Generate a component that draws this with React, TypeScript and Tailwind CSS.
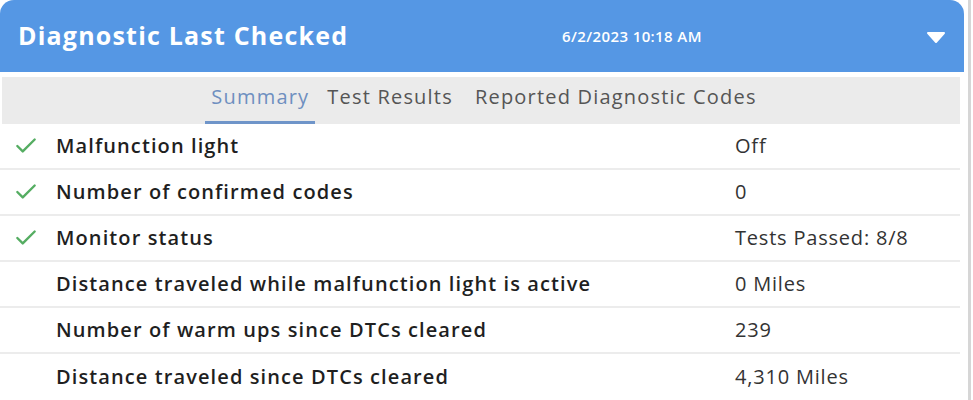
import { Check } from "lucide-react";

const rows = [
  { label: "Malfunction light", value: "Off", ok: true },
  { label: "Number of confirmed codes", value: "0", ok: true },
  { label: "Monitor status", value: "Tests Passed: 8/8", ok: true },
  { label: "Distance traveled while malfunction light is active", value: "0 Miles", ok: false },
  { label: "Number of warm ups since DTCs cleared", value: "239", ok: false },
  { label: "Distance traveled since DTCs cleared", value: "4,310 Miles", ok: false },
];

export default function App() {
  return (
    <div className="w-[973px] h-[400px] bg-white overflow-hidden flex font-['Open_Sans',sans-serif]">
      <div className="w-[964px] flex flex-col">
        {/* Header */}
        <div className="h-[72px] bg-[#5597e4] rounded-t-[14px] flex items-center pl-[18px] pr-[18px]">
          <h1 className="text-[25px] font-bold text-white w-[544px] tracking-[1.2px]">
            Diagnostic Last Checked
          </h1>
          <span className="text-[15px] font-semibold text-white flex-1 tracking-[0.4px]">6/2/2023 10:18 AM</span>
          <svg width="20" height="13" viewBox="0 0 20 13" className="mt-[2px]">
            <path d="M2 2 L18 2 L10 11 Z" fill="white" stroke="white" strokeWidth="2" strokeLinejoin="round" />
          </svg>
        </div>

        {/* Tabs */}
        <div className="mt-[5px] mx-[2px] mr-[4px] h-[47px] bg-[#ebebeb] flex justify-center items-end gap-[12px] text-[20px] tracking-[1.2px]">
          <div className="px-[6px] pb-[9px] border-b-[3px] border-[#6f95c9] text-[#6e8fc0]">Summary</div>
          <div className="pb-[12px] text-[#555]">Test Results</div>
          <div className="pl-[10px] pb-[12px] text-[#555]">Reported Diagnostic Codes</div>
        </div>

        {/* Rows */}
        <div className="flex flex-col mr-[4px]">
          {rows.map((r, i) => (
            <div
              key={r.label}
              className={`h-[46px] flex items-center ${i < rows.length - 1 ? "border-b-2 border-[#ececec]" : ""}`}
            >
              <div className="w-[56px] pl-[13px]">
                {r.ok && <Check className="w-[26px] h-[26px] text-[#55ad62]" strokeWidth={2.2} />}
              </div>
              <div className="w-[679px] text-[20px] font-semibold text-[#1f1f1f] tracking-[1.1px]">{r.label}</div>
              <div className="text-[20px] text-[#333] tracking-[0.8px]">{r.value}</div>
            </div>
          ))}
        </div>
      </div>
      <div className="w-[3px] ml-[4px] bg-[#d6d6d6]" />
    </div>
  );
}
